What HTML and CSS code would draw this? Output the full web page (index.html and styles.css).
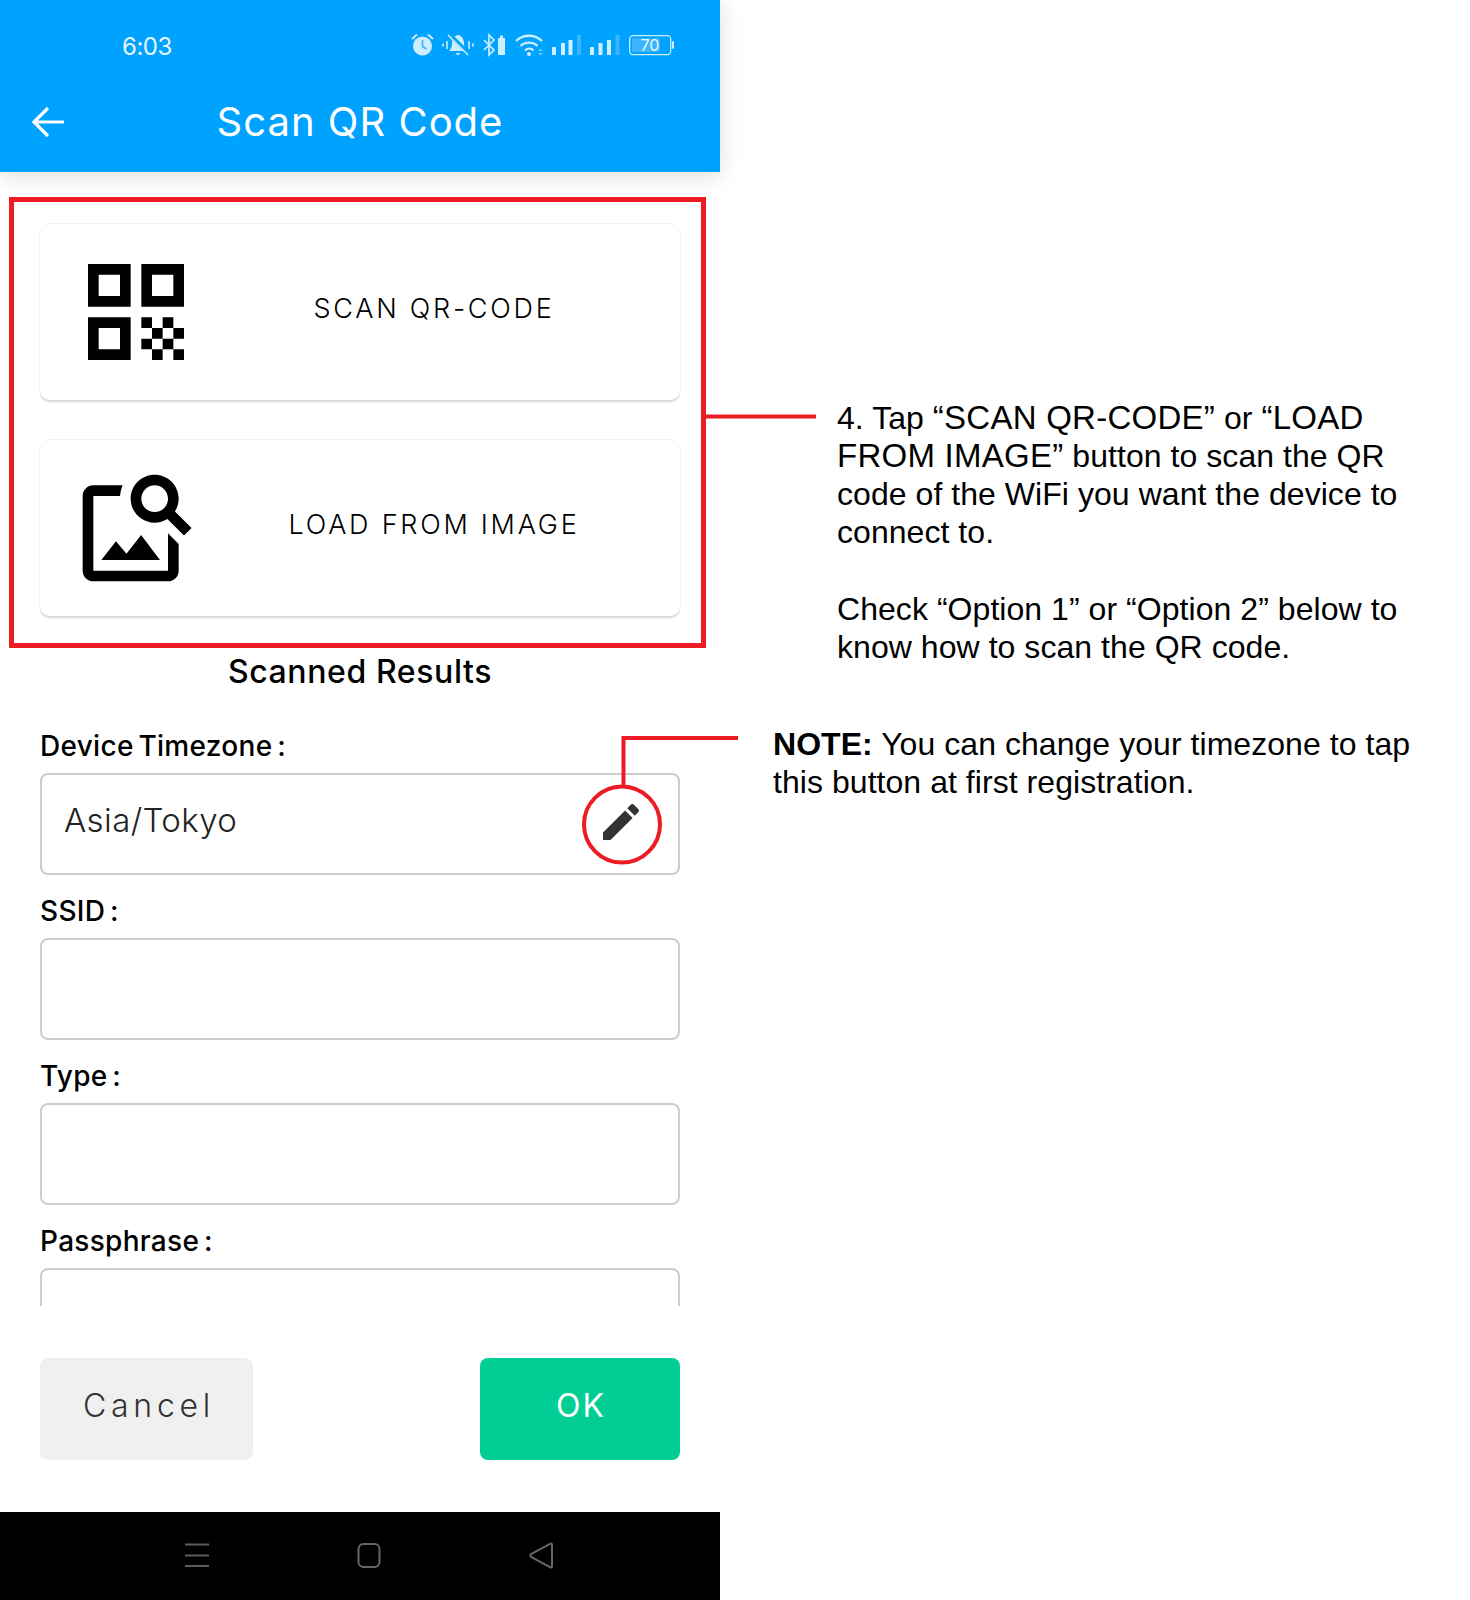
FILE: index.html
```html
<!DOCTYPE html>
<html lang="en">
<head>
<meta charset="utf-8">
<title>Scan QR Code</title>
<link rel="stylesheet" href="styles.css">
</head>
<body>
<div class="canvas">
  <section class="phone">
    <header class="header">
      <div class="status">
        <span class="time">6:03</span>
        <svg class="status-icons" viewBox="0 0 320 60" width="320" height="60">
          <g fill="#cdeeff" stroke="none">
            <circle cx="42.5" cy="26" r="9.5"/>
            <path d="M42.5 20v6.5l4 2.5" fill="none" stroke="#3db4ff" stroke-width="1.6"/>
            <path d="M32 19l5-4.500M53 19l-5-4.500" fill="none" stroke="#cdeeff" stroke-width="2"/>
            <path d="M69 31c2-2 3-4 3-8 0-4 3-8 6-8s6 4 6 8c0 4 1 6 3 8zM75.500 33h5l-2.500 2.500z"/>
            <path d="M69 14l20 20" stroke="#00a2ff" stroke-width="4"/>
            <path d="M68 15l20 20" stroke="#cdeeff" stroke-width="1.600"/>
            <path d="M63 23.500v3M67 21v8M89 21v8M93 23.500v3" stroke="#cdeeff" stroke-width="1.600"/>
            <path d="M104 20l10 10-5 5V15l5 5-10 10" fill="none" stroke="#cdeeff" stroke-width="1.700"/>
            <path d="M118 18h2v-2.500h3V18h2v17h-7z"/>
            <path d="M136 21c7-7 19-7 26 0M140.500 26c4.500-4.500 12.500-4.500 17 0M145 30.500c2.500-2.500 6-2.500 8.500 0" fill="none" stroke="#cdeeff" stroke-width="2.300"/>
            <circle cx="149" cy="34" r="2"/>
            <path d="M158 31l2.500-2.500 2.500 2.500zM158 33h5l-2.500 2.500z" fill="#6ec8ff"/>
            <rect x="172" y="27" width="4" height="8"/>
            <rect x="181" y="23" width="4" height="12"/>
            <rect x="188.500" y="20" width="4" height="15"/>
            <rect x="197" y="15" width="4" height="20" fill="#3db4ff"/>
            <rect x="210" y="27" width="4" height="8"/>
            <rect x="218.500" y="23" width="4" height="12"/>
            <rect x="227" y="20" width="4" height="15"/>
            <rect x="235.500" y="15" width="4" height="20" fill="#3db4ff"/>
            <rect x="252" y="18" width="28" height="14" rx="2" fill="#3db4ff"/>
            <rect x="249.700" y="15.700" width="41" height="19" rx="3.500" fill="none" stroke="#cdeeff" stroke-width="1.300"/>
            <rect x="292" y="21" width="2" height="8" rx="1"/>
            <text class="battery-text" x="270" y="31" text-anchor="middle">70</text>
          </g>
        </svg>
      </div>
      <div class="toolbar">
        <svg class="back" viewBox="0 0 32 32" width="32" height="32">
          <path d="M32 16H3M16 2L2 16l14 14" fill="none" stroke="#fff" stroke-width="3.200"/>
        </svg>
        <h1 class="title">Scan QR Code</h1>
        <span></span>
      </div>
    </header>

    <main class="main">
      <button class="card">
        <svg class="card-icon" viewBox="0 0 24 24" width="128" height="128">
          <path d="M3 11h8V3H3v8zm2-6h4v4H5V5zM3 21h8v-8H3v8zm2-6h4v4H5v-4zM13 3v8h8V3h-8zm6 6h-4V5h4v4zM19 19h2v2h-2zM13 13h2v2h-2zM15 15h2v2h-2zM13 17h2v2h-2zM15 19h2v2h-2zM17 17h2v2h-2zM17 13h2v2h-2zM19 15h2v2h-2z"/>
        </svg>
        <span class="card-label">SCAN QR-CODE</span>
      </button>
      <button class="card card-second">
        <svg class="card-icon" viewBox="0 0 24 24" width="128" height="128">
          <path d="M18 13v7H4V6h5.020c.05-.71.22-1.380.48-2H4c-1.100 0-2 .9-2 2v14c0 1.100.9 2 2 2h14c1.100 0 2-.9 2-2v-5l-2-2zm-1.500 5h-11l2.750-3.530 1.960 2.360 2.750-3.540zm2.800-9.110c.44-.7.7-1.530.7-2.390C20 4.010 17.990 2 15.500 2S11 4.010 11 6.500 13.010 11 15.490 11c.88 0 1.700-.26 2.390-.7L21 13.420 22.420 12 19.300 8.890zM15.500 9C14.120 9 13 7.880 13 6.500S14.120 4 15.500 4 18 5.120 18 6.500 16.880 9 15.500 9z"/>
        </svg>
        <span class="card-label">LOAD FROM IMAGE</span>
      </button>

      <h2 class="results">Scanned Results</h2>

      <div class="field">
        <label class="field-label">Device Timezone :</label>
        <div class="input">
          <span class="input-value">Asia/Tokyo</span>
          <svg class="edit" viewBox="0 0 24 24" width="48" height="48">
            <path d="M3 17.250V21h3.750L17.810 9.940l-3.750-3.750L3 17.250zM20.710 7.040c.39-.39.39-1.020 0-1.410l-2.340-2.340c-.39-.39-1.020-.39-1.410 0l-1.830 1.830 3.750 3.750 1.830-1.830z"/>
          </svg>
        </div>
      </div>
      <div class="field">
        <label class="field-label">SSID :</label>
        <div class="input"></div>
      </div>
      <div class="field">
        <label class="field-label">Type :</label>
        <div class="input"></div>
      </div>
      <div class="field">
        <label class="field-label">Passphrase :</label>
        <div class="input"></div>
      </div>
    </main>

    <div class="actions">
      <button class="btn btn-cancel">Cancel</button>
      <button class="btn btn-ok">OK</button>
    </div>

    <nav class="navbar">
      <svg viewBox="0 0 400 30" width="400" height="30">
        <path d="M5 4.500H29M5 15.500H29M5 26H29" stroke="#5c5c5c" stroke-width="2" fill="none"/>
        <rect x="178.500" y="4" width="21" height="23" rx="5" fill="none" stroke="#666" stroke-width="2"/>
        <path d="M372 4.500v22a1 1 0 0 1-1.500.8L351 17a2 2 0 0 1 0-3L370.500 3.700a1 1 0 0 1 1.500.8z" fill="none" stroke="#666" stroke-width="2"/>
      </svg>
    </nav>
  </section>

  <aside class="notes">
    <div class="note-main">
      <p class="note-para">4. Tap <span class="caps">“SCAN QR-CODE”</span> or <span class="caps">“LOAD</span><br><span class="caps">FROM IMAGE”</span> button to scan the QR<br>code of the WiFi you want the device to<br>connect to.</p>
      <p class="note-para note-spaced">Check “Option 1” or “Option 2” below to<br>know how to scan the QR code.</p>
    </div>
    <p class="note-para note-tz"><strong>NOTE:</strong> You can change your timezone to tap<br>this button at first registration.</p>
  </aside>

  <svg class="overlay" viewBox="0 0 1470 1600" width="1470" height="1600">
    <rect x="11.500" y="199.500" width="692" height="446" fill="none" stroke="#ed1c24" stroke-width="5"/>
    <path d="M706 416.500H816" fill="none" stroke="#ed1c24" stroke-width="4"/>
    <path d="M738 738H623.500V786" fill="none" stroke="#ed1c24" stroke-width="4"/>
    <circle cx="622" cy="824.500" r="38" fill="none" stroke="#ed1c24" stroke-width="4"/>
  </svg>
</div>
</body>
</html>
```

FILE: styles.css
```css
* { box-sizing: border-box; }

html, body {
  margin: 0;
  padding: 0;
  background: #fff;
}

.canvas {
  position: relative;
  display: flex;
  width: 1470px;
  height: 1600px;
  overflow: hidden;
  font-family: Inter, "Noto Sans", sans-serif;
  color: #000;
}

.phone {
  display: flex;
  flex-direction: column;
  width: 720px;
  height: 1600px;
  flex: none;
}

.header {
  position: relative;
  z-index: 1;
  height: 172px;
  background: #00a2ff;
  box-shadow: 0 3px 22px rgba(0, 0, 0, .14);
  color: #fff;
}

.status {
  display: flex;
  align-items: flex-start;
  height: 80px;
  padding: 20px 20px 0 122px;
}

.time {
  font-size: 24px;
  line-height: 54px;
  letter-spacing: -.5px;
  color: #e6f6ff;
}

.status-icons {
  display: block;
  margin-left: auto;
}

.battery-text {
  font-family: Inter, sans-serif;
  font-size: 16px;
  fill: #e6f6ff;
}

.toolbar {
  display: grid;
  grid-template-columns: 1fr auto 1fr;
  align-items: center;
  height: 84px;
  padding-left: 32px;
}

.back { display: block; }

.title {
  margin: 0 0 0 -32px;
  font-size: 40px;
  font-weight: 400;
  line-height: 84px;
  letter-spacing: 1px;
}

.main {
  height: 1134px;
  overflow: hidden;
  padding: 51px 40px 0;
}

.card {
  display: flex;
  align-items: center;
  width: 640px;
  height: 177px;
  padding: 0 12px 0 32px;
  border: 0;
  border-top: 1px solid #f2f2f2;
  border-radius: 10px;
  background: #fff;
  box-shadow: 0 2px 2px rgba(0, 0, 0, .17);
  font-family: inherit;
  color: #000;
}

.card-second { margin-top: 39px; }

.card-icon {
  display: block;
  flex: none;
}

.card-label {
  flex: 1;
  padding-bottom: 7px;
  text-align: center;
  font-size: 27px;
  font-weight: 300;
  letter-spacing: 2.750px;
}

.results {
  margin: 34px 0 0;
  text-align: center;
  font-size: 32px;
  font-weight: 500;
  line-height: 44px;
  letter-spacing: .6px;
}

.field { margin-bottom: 15px; }

.results + .field { margin-top: 31px; }

.field-label {
  display: block;
  font-size: 28px;
  font-weight: 500;
  line-height: 42px;
  margin-bottom: 6px;
  letter-spacing: .3px;
  word-spacing: -3px;
}

.input {
  display: flex;
  align-items: center;
  justify-content: space-between;
  height: 102px;
  padding: 0 33px 0 22px;
  border: 2px solid #ccc;
  border-radius: 8px;
}

.input-value {
  padding-bottom: 8px;
  font-size: 33px;
  font-weight: 300;
  letter-spacing: .4px;
  color: #222;
}

.edit {
  display: block;
  margin-bottom: 5px;
  fill: #333;
}

.actions {
  display: flex;
  justify-content: space-between;
  padding: 52px 40px;
}

.btn {
  height: 102px;
  padding: 0 0 8px;
  border: 0;
  border-radius: 8px;
  font-family: inherit;
  font-size: 32px;
  font-weight: 300;
}

.btn-cancel {
  width: 213px;
  padding-left: 5px;
  background: #f0f0f0;
  color: #333;
  letter-spacing: 4.700px;
}

.btn-ok {
  width: 200px;
  padding-left: 2px;
  background: #00ce95;
  color: #fff;
  font-weight: 400;
  letter-spacing: 2px;
}

.navbar {
  display: flex;
  height: 88px;
  margin-top: auto;
  padding: 28px 0 0 180px;
  background: #000;
}

.navbar svg { display: block; }

.notes {
  flex: none;
  padding: 399px 0 0 53px;
}

.note-main { padding-left: 64px; }

.note-para {
  margin: 0;
  font-family: "Liberation Sans", Arial, sans-serif;
  font-size: 32px;
  line-height: 38px;
  letter-spacing: .05px;
  white-space: nowrap;
}

.caps {
  font-size: 33px;
  letter-spacing: .25px;
}

.note-spaced { margin-top: 39px; }

.note-tz { margin-top: 59px; }

.overlay {
  position: absolute;
  top: 0;
  left: 0;
  z-index: 2;
  pointer-events: none;
}
```
